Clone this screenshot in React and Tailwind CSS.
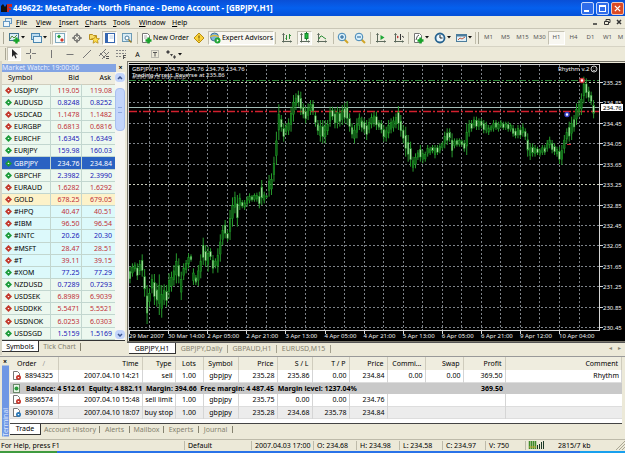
import React, { useState } from 'react';

const quotes = [
    ['USDJPY', '119.05', '119.08', 'down', 'fx'],
    ['AUDUSD', '0.8248', '0.8252', 'up', 'fx'],
    ['USDCAD', '1.1478', '1.1482', 'down', 'fx'],
    ['EURGBP', '0.6813', '0.6816', 'down', 'fx'],
    ['EURCHF', '1.6345', '1.6349', 'up', 'fx'],
    ['EURJPY', '159.98', '160.03', 'up', 'fx'],
    ['GBPJPY', '234.76', '234.84', 'up', 'fx'],
    ['GBPCHF', '2.3982', '2.3990', 'up', 'fx'],
    ['EURAUD', '1.6282', '1.6292', 'down', 'fx'],
    ['GOLD', '678.25', '679.05', 'down', 'metal'],
    ['#HPQ', '40.47', '40.51', 'down', 'stock'],
    ['#IBM', '96.50', '96.54', 'down', 'stock'],
    ['#INTC', '20.26', '20.30', 'up', 'stock'],
    ['#MSFT', '28.47', '28.51', 'down', 'stock'],
    ['#T', '39.11', '39.15', 'down', 'stock'],
    ['#XOM', '77.25', '77.29', 'up', 'stock'],
    ['NZDUSD', '0.7289', '0.7293', 'up', 'fx'],
    ['USDSEK', '6.8989', '6.9039', 'down', 'fx'],
    ['USDDKK', '5.5471', '5.5521', 'down', 'fx'],
    ['USDNOK', '6.0253', '6.0303', 'down', 'fx'],
    ['USDSGD', '1.5159', '1.5169', 'up', 'fx'],
];

const rowColors = { fx: 'bg-[#ecf8ef]', metal: 'bg-[#fdf2c9]', stock: 'bg-[#dcf9fb]' };

// one candle each: high, low, and 1 when it closed lower. Three units to a pixel.
const candles = [
    [620, 670, 1], [610, 650], [607, 635], [610, 660, 1], [600, 645], [583, 650, 1], [627, 710, 1], [675, 792, 1],
    [685, 740], [643, 700], [642, 735, 1], [670, 740, 1], [643, 765], [675, 773], [673, 735], [675, 740, 1],
    [640, 715], [635, 695], [615, 677], [580, 670], [595, 670, 1], [635, 720], [610, 660], [600, 640],
    [580, 625], [583, 605, 1], [625, 675], [645, 675, 1], [615, 678], [583, 655], [533, 615, 1], [555, 620, 1],
    [560, 635], [565, 600, 1], [585, 640, 1], [595, 625], [565, 638], [523, 605], [495, 555], [480, 535, 1],
    [510, 545, 1], [450, 540], [412, 500], [395, 460], [405, 500, 1], [400, 450], [420, 445, 1], [420, 450],
    [408, 440], [400, 430], [405, 425, 1], [400, 425], [398, 425], [395, 445, 1], [360, 435, 1], [395, 430],
    [405, 415], [345, 410], [340, 405], [290, 365], [215, 315], [133, 240], [165, 215, 1], [190, 245, 1],
    [190, 225], [175, 225], [140, 215], [105, 185],
    [100, 150], [92, 140, 1], [95, 165, 1], [130, 175, 1], [140, 190, 1], [130, 180], [120, 165], [120, 165, 1],
    [155, 200, 1], [180, 225, 1], [180, 245], [180, 250, 1], [180, 250], [180, 225], [140, 200], [140, 180, 1],
    [145, 205, 1], [140, 205], [145, 200, 1], [135, 195], [128, 190, 1], [123, 195, 1], [160, 215, 1], [190, 235, 1],
    [195, 250], [175, 235], [160, 210], [170, 215, 1], [175, 220, 1], [180, 240, 1], [175, 220], [160, 205],
    [155, 200], [155, 210, 1], [180, 210, 1], [180, 220, 1], [195, 245, 1], [200, 245], [180, 235], [175, 220],
    [170, 215], [160, 205], [138, 210, 1], [165, 230, 1], [195, 250, 1], [200, 290, 1], [225, 305, 1], [245, 320, 1],
    [290, 335], [280, 325], [270, 300], [255, 305, 1], [270, 310], [275, 305], [255, 290], [260, 285],
    [255, 280, 1], [255, 295], [255, 285, 1], [250, 280], [245, 270], [215, 265], [205, 255, 1], [205, 245, 1],
    [220, 292, 1], [235, 265], [235, 260, 1], [235, 260], [238, 260, 1], [240, 275, 1], [190, 285], [180, 230],
    [180, 215, 1], [170, 205], [170, 210, 1], [175, 210], [175, 205, 1], [180, 220, 1], [185, 220], [195, 225],
    [195, 215], [180, 215], [180, 210, 1], [185, 215], [180, 205], [185, 210, 1], [185, 210], [185, 215, 1],
    [190, 215], [195, 230, 1], [205, 235, 1], [195, 235], [200, 235, 1], [190, 230], [205, 240, 1], [220, 290, 1],
    [250, 300], [250, 290, 1], [255, 290], [260, 285, 1], [265, 290], [255, 285], [255, 285, 1], [240, 275],
    [230, 265], [240, 280, 1], [250, 285, 1], [260, 290], [260, 312, 1], [255, 315], [225, 280], [205, 250],
    [185, 245, 1], [170, 240], [165, 215, 1], [130, 195], [120, 170], [100, 165], [50, 130], [55, 115, 1],
    [80, 125, 1], [95, 135, 1], [120, 175, 1],
];

const prices = ['235.25', '234.85', '234.45', '234.05', '233.65', '233.25', '232.85', '232.45', '232.05', '231.65', '231.25', '230.85', '230.45'];
const times = ['29 Mar 2007', '30 Mar 14:00', '2 Apr 05:00', '2 Apr 21:00', '3 Apr 13:00', '4 Apr 05:00', '4 Apr 21:00', '5 Apr 13:00', '6 Apr 05:00', '6 Apr 21:00', '9 Apr 12:00', '10 Apr 04:00'];

const menus = [
    ['File', 'w-[20px]'],
    ['View', 'w-[23px]'],
    ['Insert', 'w-[26px]'],
    ['Charts', 'w-[28px]'],
    ['Tools', 'w-[26px]'],
    ['Window', 'w-[33px]'],
    ['Help', 'w-[20px]'],
];

const Chart = () => {
    const gridX = (i) => Math.round(21.5 + (i * 430) / 22) - 0.5;
    const gridY = (i) => Math.round(19 + (i * 245) / 12) + 0.5;

    return (
        <svg viewBox="0 0 497 278" className="block h-auto w-full bg-black" role="img" aria-label="GBPJPY hourly chart">
            <g stroke="#7d8288" strokeDasharray="2 2">
                {Array.from({ length: 23 }, (_, i) => (
                    <line key={i} x1={gridX(i)} x2={gridX(i)} y1="2" y2="267" />
                ))}
                {prices.map((p, i) => (
                    <line key={p} x1="1" x2="471" y1={gridY(i)} y2={gridY(i)} stroke={i === 0 || i === 5 ? '#c9ccbb' : '#7d8288'} />
                ))}
            </g>
            <path d="M1 17.5H471" stroke="#2f8a3a" strokeDasharray="7 2 2 2" />
            <path d="M1 48.5H471" stroke="#d3202e" strokeWidth="1.4" strokeDasharray="8 2 2 2" />
            <path d="M1 44.5H471" stroke="#a3bcb6" />

            {candles.map(([high, low, fell], i) => {
                const x = 2 + i * 2.44;
                const top = high / 3 - 3;
                const size = (low - high) / 3;
                return (
                    <g key={i}>
                        <rect x={x - 0.5} y={top} width="1" height={size} fill="#279a2d" />
                        <rect
                            x={x - 0.8}
                            y={top + size * 0.28}
                            width="1.6"
                            height={size * 0.44}
                            fill={fell ? '#b4e8ac' : '#0f6416'}
                            stroke="#1f9a26"
                            strokeWidth="0.5"
                        />
                    </g>
                );
            })}

            <circle cx="454" cy="17.5" r="2" fill="#fff" stroke="#d8343a" strokeWidth="1.5" />
            <circle cx="439" cy="51.5" r="2" fill="#fff" stroke="#3a44c8" strokeWidth="1.5" />
            <path d="M439 81.5H443" stroke="#c01f2c" />

            <path d="M0.5 278V0M1 1.5H471M1 267.5H472M471.5 1V268" stroke="#d6d6d6" fill="none" />
            <g fill="#f2f2f2" fontSize="6">
                <text x="4" y="8">GBPJPY,H1&nbsp; 234.76 234.76 234.76 234.76</text>
                <text x="4" y="14">Trading Arrest, Reverse at 235.86</text>
                <text x="4" y="16" fillOpacity="0.7">#8901078 buy stop</text>
                <text x="430" y="8">Rhythm v.2</text>
                {prices.map((p, i) => (
                    <g key={p}>
                        <path d={`M472 ${gridY(i)}h3`} stroke="#d6d6d6" />
                        <text x="475" y={gridY(i) + 2.5}>{p}</text>
                    </g>
                ))}
                {times.map((t, i) => (
                    <g key={t}>
                        <path d={`M${Math.round(1 + i * 39.1) + 0.5} 268v3`} stroke="#d6d6d6" />
                        <text x={1 + i * 39.1} y="275">{t}</text>
                    </g>
                ))}
            </g>
            <rect x="473" y="41" width="22" height="7" fill="#fff" />
            <text x="475" y="47" fontSize="6" fill="#000">234.76</text>
            <g stroke="#c8c8c8" fill="none">
                <circle cx="466" cy="6" r="3" />
                <path d="M464.5 7q1.5 1.5 3 0M465 5h.5M467 5h.5" strokeWidth="0.8" />
            </g>
        </svg>
    );
};

const Icon = ({ children }) => (
    <svg viewBox="0 0 12 12" className="size-3 shrink-0" fill="none" stroke="#555" aria-hidden="true">
        {children}
    </svg>
);

const Caret = () => (
    <svg viewBox="0 0 4 3" className="h-[3px] w-1 shrink-0" aria-hidden="true"><path d="M0 0h4l-2 2.5z" fill="#111" /></svg>
);

const ToolButton = ({ label, width, pressed, caret, text, children }) => (
    <button
        type="button"
        aria-label={label}
        className={`flex h-[14px] shrink-0 items-center justify-center gap-px whitespace-nowrap ${width} ${pressed ? 'border border-[#c3c0b1] border-r-white border-b-white bg-[#f8f7f1]' : ''}`}
    >
        {children}
        {text}
        {caret && <Caret />}
    </button>
);

const Divider = () => <span className="mx-px h-3 w-px shrink-0 bg-[#c0bdab]" />;
const Grip = () => <span className="mx-px h-3 w-px shrink-0 border-l border-[#a9a694]" />;

const Plus = () => <path d="M8.5 5.5v6M5.5 8.5h6" stroke="#17a32a" strokeWidth="2.4" />;
const Axes = () => <path d="M2.5 1.5v9M1 9.5h9.5M1.5 3l1-1.5 1 1.5M9.5 8.5l1 1-1 1" stroke="#5d6a5d" />;

const MainToolbar = () => (
    <div className="flex h-[18px] items-center overflow-hidden border-t border-[#c9c6b6] bg-[#efeddf] pl-0.5">
        <Grip />
        <ToolButton label="New chart" width="w-[22px]" caret>
            <Icon><rect x="1.5" y="1.5" width="9" height="7" fill="#d8ecf5" stroke="#42758f" /><path d="M2 7l2-3 2 2 3-3" stroke="#5a8c3c" /><Plus /></Icon>
        </ToolButton>
        <ToolButton label="Profiles" width="w-[22px]" caret>
            <Icon><rect x="1.5" y="1.5" width="8" height="6" fill="#bcdcf0" stroke="#4a86b0" /><rect x="3.5" y="4.5" width="8" height="6" fill="#e6f3fa" stroke="#4a86b0" /></Icon>
        </ToolButton>
        <Divider />
        <ToolButton label="Market Watch" width="w-[15px]" pressed>
            <Icon><rect x="1.5" y="1.5" width="9" height="9" fill="#f4fafc" stroke="#7fa9c0" /><path d="M3 4.5l2-2 2 2-2 2z" fill="#1f9c35" stroke="none" /><path d="M6 8l2-2 2 2-2 2z" fill="#d33b2b" stroke="none" /></Icon>
        </ToolButton>
        <ToolButton label="Data Window" width="w-[19px]">
            <Icon><circle cx="6" cy="6" r="3.2" /><path d="M6 1v4M6 7v4M1 6h4M7 6h4" /></Icon>
        </ToolButton>
        <ToolButton label="Navigator" width="w-[16px]">
            <Icon><path d="M1.5 2.5h3l1 1h3v4h-7z" fill="#f7dd6a" stroke="#b78e1f" /><path d="M7.5 4l1.2 2.4 2.8.3-2 1.8.6 2.7-2.6-1.4-2.4 1.4.5-2.7-2-1.8 2.7-.3z" fill="#ffe04a" stroke="#b98b16" strokeWidth="0.8" /></Icon>
        </ToolButton>
        <ToolButton label="Terminal" width="w-[15px]" pressed>
            <Icon><rect x="1.5" y="1.5" width="9" height="9" fill="#fff" stroke="#3566b0" /><path d="M3 2v8" stroke="#3566b0" strokeWidth="2" /><path d="M5.5 4h4M5.5 6h4" stroke="#b8cde6" /></Icon>
        </ToolButton>
        <ToolButton label="Strategy Tester" width="w-[19px]">
            <Icon><rect x="1.5" y="1.5" width="9" height="8" fill="#d9ecf5" stroke="#6b9ab5" /><circle cx="6" cy="6" r="2" fill="#fff" stroke="#4a7da0" /><path d="M7.5 7.5l3 3" stroke="#987b2a" strokeWidth="1.5" /></Icon>
        </ToolButton>
        <Divider />
        <ToolButton label="New Order" width="w-[51px]" text="New Order">
            <Icon><path d="M2.5 1.5h5l2 2v7h-7z" fill="#fff" stroke="#777" /><path d="M4 4h3M4 6h3" stroke="#aaa" /><Plus /></Icon>
        </ToolButton>
        <ToolButton label="MetaEditor" width="w-[18px]">
            <Icon><path d="M6 1l5 5-5 5-5-5z" fill="#fbd33c" stroke="#b88d0e" /><path d="M6 3.5v3M6 7.5v1.2" stroke="#5f4600" /></Icon>
        </ToolButton>
        <ToolButton label="Expert Advisors" width="w-[66px]" pressed text="Expert Advisors">
            <Icon><circle cx="5.5" cy="5" r="4" fill="#7fb7dc" stroke="#416f91" /><path d="M1 5q4.5-3 9 0" stroke="#e1be3e" strokeWidth="1.5" /><circle cx="8.5" cy="8.5" r="3" fill="#22a536" stroke="none" /><path d="M7.8 7l2 1.5-2 1.5z" fill="#fff" stroke="none" /></Icon>
        </ToolButton>
        <Divider />
        <ToolButton label="Bar chart" width="w-[20px]">
            <Icon><Axes /><path d="M5.5 3v5M8.5 2v5M4.5 6.5h1M8.5 3.5H10" stroke="#2e8f38" /></Icon>
        </ToolButton>
        <ToolButton label="Candlesticks" width="w-[15px]" pressed>
            <Icon><Axes /><path d="M7.5 0v8.5" stroke="#14802a" /><rect x="6" y="1.5" width="3" height="5" fill="#1fbd3b" stroke="#14802a" /></Icon>
        </ToolButton>
        <ToolButton label="Line chart" width="w-[20px]">
            <Icon><Axes /><path d="M3 7q2-5 4-2l3 2" stroke="#2e8f38" /></Icon>
        </ToolButton>
        <Divider />
        <ToolButton label="Zoom in" width="w-[15px]">
            <Icon><path d="M7.5 7.5L11 11" stroke="#d0a528" strokeWidth="2" /><circle cx="5" cy="5" r="3.8" fill="#d9f0fb" stroke="#3f84b5" /><path d="M3 5h4M5 3v4" stroke="#1f5f93" /></Icon>
        </ToolButton>
        <ToolButton label="Zoom out" width="w-[19px]">
            <Icon><path d="M7.5 7.5L11 11" stroke="#d0a528" strokeWidth="2" /><circle cx="5" cy="5" r="3.8" fill="#d9f0fb" stroke="#3f84b5" /><path d="M3 5h4" stroke="#1f5f93" /></Icon>
        </ToolButton>
        <Divider />
        <ToolButton label="Auto scroll" width="w-[18px]">
            <Icon><Axes /><path d="M5.5 3l4 2.5-4 2.5z" fill="#1fa736" stroke="none" /></Icon>
        </ToolButton>
        <ToolButton label="Chart shift" width="w-[17px]">
            <Icon><Axes /><path d="M7.5 2v6M9 4l2 1.5" stroke="#333" /><path d="M4 3.5L6 5 4 6.5z" fill="#b33" stroke="none" /></Icon>
        </ToolButton>
        <Divider />
        <ToolButton label="Indicators" width="w-[21px]" caret>
            <Icon><path d="M2.5 1.5h5l2 2v7h-7z" fill="#fff" stroke="#777" /><path d="M4 8q1-5 3-5" /><Plus /></Icon>
        </ToolButton>
        <ToolButton label="Periods" width="w-[22px]" caret>
            <Icon><circle cx="6" cy="6" r="4.5" fill="#eaf6fd" stroke="#26638f" strokeWidth="1.8" /><path d="M6 3v3h2.5" stroke="#222" /></Icon>
        </ToolButton>
        <ToolButton label="Templates" width="w-[21px]" caret>
            <Icon><rect x="1.5" y="2.5" width="10" height="7" fill="#e1f0f8" stroke="#4c7d9c" /><path d="M1.5 3.5h10" stroke="#4c7d9c" strokeWidth="2" /><path d="M3 8l2-2 2 1 3-2" stroke="#c25a3a" /></Icon>
        </ToolButton>
        <Divider />
        <Grip />
        <div className="flex text-[6px] text-[#555]">
            {['M1', 'M5', 'M15', 'M30', 'H1', 'H4', 'D1', 'W1'].map((tf) => (
                <ToolButton key={tf} label={tf} width="w-[17px]" pressed={tf === 'H1'} text={tf} />
            ))}
            <ToolButton label="MN" width="w-[9px]" text="M" />
        </div>
    </div>
);

const LineToolbar = () => (
    <div className="flex h-[15px] items-center overflow-hidden border-t border-[#d6d3c4] bg-[#ece9d8] pl-1">
        <Grip />
        <ToolButton label="Cursor" width="w-[14px]" pressed>
            <Icon><path d="M4 1v8l2-2 1.500 3.500 1.200-.5L7.200 6.500H10z" fill="#222" stroke="none" /></Icon>
        </ToolButton>
        <ToolButton label="Crosshair" width="w-[20px]">
            <Icon><path d="M5.5 1v4M5.5 7v4M1 5.5h4M7 5.5h4" stroke="#777" /></Icon>
        </ToolButton>
        <ToolButton label="Vertical line" width="w-[20px]"><Icon><path d="M6.5 2v8" stroke="#777" /></Icon></ToolButton>
        <ToolButton label="Horizontal line" width="w-[17px]"><Icon><path d="M2.5 6.5h7" stroke="#777" /></Icon></ToolButton>
        <ToolButton label="Trendline" width="w-[17px]"><Icon><path d="M2 10l8-8" stroke="#777" /></Icon></ToolButton>
        <ToolButton label="Equidistant channel" width="w-[17px]">
            <Icon><path d="M1 8l7-7M4 11l7-7M2 5l5 5M5 3l4 4" stroke="#777" /><path d="M8 8.5h3M8 10.5h3" /></Icon>
        </ToolButton>
        <ToolButton label="Fibonacci retracement" width="w-[17px]">
            <Icon><path d="M1 2.5h10M1 5.5h10M1 8.5h6" stroke="#888" strokeDasharray="2 1" /><path d="M8.5 7v4M8.5 7.5H11M8.5 9.5h2" /></Icon>
        </ToolButton>
        <ToolButton label="Text" width="w-[17px]" text="A" />
        <ToolButton label="Text label" width="w-[17px]">
            <Icon><rect x="2.5" y="2.5" width="7" height="7" stroke="#888" strokeDasharray="1 1" /><path d="M4 4.5h4M6 4.5v4" /></Icon>
        </ToolButton>
        <ToolButton label="Arrows" width="w-[20px]" caret>
            <Icon><path d="M1 4l2-2 2 2-2 2zM5 6h3L6.500 8.500zM8 9l1.500-2L11 9l-1.500 2z" fill="#444" stroke="none" /></Icon>
        </ToolButton>
    </div>
);

const MarketWatch = () => {
    const [selected, setSelected] = useState('GBPJPY');

    return (
        <aside className="flex w-[125px] shrink-0 flex-col border-l-2 border-[#d8d5c5] pt-0.5">
            <div className="flex h-[9px] items-center justify-between">
                <h2 className="flex h-2 flex-1 items-center bg-[#83a4e4] text-[#e9f0ff]">Market Watch: 19:00:06</h2>
                <button type="button" aria-label="Close Market Watch" className="w-[9px] text-center font-bold leading-none">×</button>
            </div>
            <div className="flex flex-1 bg-white">
                <table className="h-[268px] flex-1 table-fixed border-collapse">
                    <thead>
                        <tr className="h-3 border-b border-[#d0cdbd] bg-[#efeddf]">
                            <th className="w-12 pl-1.5 text-left font-normal">Symbol</th>
                            <th className="w-[31px] pr-0.5 text-right font-normal">Bid</th>
                            <th className="pr-1 text-right font-normal">Ask</th>
                        </tr>
                    </thead>
                    <tbody>
                        {quotes.map(([symbol, bid, ask, dir, kind]) => {
                            const active = symbol === selected;
                            const tone = active ? 'text-white' : dir === 'up' ? 'text-[#2020b8]' : 'text-[#c03038]';
                            return (
                                <tr
                                    key={symbol}
                                    onClick={() => setSelected(symbol)}
                                    className={`border-b border-[#c2d6cf] ${active ? 'bg-[#2a62c2] text-white' : rowColors[kind]}`}
                                >
                                    <td className="border-r border-[#c2d6cf] p-0 pl-[3px]">
                                        <span className="flex items-center gap-0.5">
                                            <svg viewBox="0 0 7 7" className="size-[7px]" aria-hidden="true">
                                                <path d="M3.5 0L7 3.5 3.5 7 0 3.5z" fill={dir === 'up' ? '#1c9a3a' : '#c2382c'} />
                                                <path d={dir === 'up' ? 'M3.5 2.500l1 1.500h-2z' : 'M3.5 4.500l1-1.500h-2z'} fill="#fff" />
                                            </svg>
                                            {symbol}
                                        </span>
                                    </td>
                                    <td className={`border-r border-[#c2d6cf] p-0 pr-px text-right ${tone}`}>{bid}</td>
                                    <td className={`p-0 pr-[3px] text-right ${tone}`}>{ask}</td>
                                </tr>
                            );
                        })}
                    </tbody>
                </table>
                <div className="flex w-[10px] flex-col items-center justify-between bg-[#f6f6f2] py-px">
                    <div className="flex w-full flex-col gap-1.5">
                        <button type="button" aria-label="Scroll up" className="flex h-[9px] items-center justify-center rounded-sm bg-[#c3d5fb]">
                            <svg viewBox="0 0 6 4" className="h-1 w-1.5" aria-hidden="true"><path d="M1 3l2-2 2 2" fill="none" stroke="#3c5590" strokeWidth="1.5" /></svg>
                        </button>
                        <div className="flex h-[43px] items-center justify-center rounded-sm border border-[#a9c0f0] bg-[#c3d5fb]">
                            <span className="h-1.5 w-1 border-y border-[#8ea9e0]" />
                        </div>
                    </div>
                    <button type="button" aria-label="Scroll down" className="flex h-[9px] w-full items-center justify-center rounded-sm bg-[#c3d5fb]">
                        <svg viewBox="0 0 6 4" className="h-1 w-1.5" aria-hidden="true"><path d="M1 1l2 2 2-2" fill="none" stroke="#3c5590" strokeWidth="1.5" /></svg>
                    </button>
                </div>
            </div>
            <div className="flex h-[15px] items-start border-t border-[#333]">
                <button type="button" className="h-[11px] w-[37px] border-r border-b border-[#333] bg-white">Symbols</button>
                <button type="button" className="h-[11px] w-[41px] text-[#85826f]">Tick Chart</button>
                <span className="mt-0.5 h-2 w-px bg-[#85826f]" />
            </div>
        </aside>
    );
};

const ChartTabs = () => (
    <div className="flex h-[13px] items-start border-t border-[#555] pl-0.5 text-[#85826f]">
        <button type="button" className="h-[11px] w-[47px] border-r border-b border-[#333] bg-white text-black">GBPJPY,H1</button>
        <button type="button" className="h-[11px] w-[51px] text-center">GBPJPY,Daily</button>
        <span className="mt-0.5 h-2 w-px bg-[#a5a28f]" />
        <button type="button" className="h-[11px] w-[48px] text-center">GBPAUD,H1</button>
        <span className="mt-0.5 h-2 w-px bg-[#a5a28f]" />
        <button type="button" className="h-[11px] w-[53px] text-center">EURUSD,M15</button>
        <span className="mt-0.5 h-2 w-px bg-[#a5a28f]" />
        <div className="ml-auto flex gap-1.5 pr-1">
            <button type="button" aria-label="Previous chart" className="h-[11px] text-[6px]">◂</button>
            <button type="button" aria-label="Next chart" className="h-[11px] text-[6px]">▸</button>
        </div>
    </div>
);

const columns = [
    ['Time', 'w-[84px]', 'text-right'],
    ['Type', 'w-[33px]', 'text-right'],
    ['Lots', 'w-[28px]', 'text-center'],
    ['Symbol', 'w-[35px]', 'text-center'],
    ['Price', 'w-[39px]', 'text-right'],
    ['S / L', 'w-[35px]', 'text-right'],
    ['T / P', 'w-[37px]', 'text-right'],
    ['Price', 'w-[38px]', 'text-right'],
    ['Commi...', 'w-[38px]', 'text-right'],
    ['Swap', 'w-[38px]', 'text-right'],
    ['Profit', 'w-[42px]', 'text-right'],
    ['Comment', '', 'text-right'],
];

const OrderIcon = ({ color }) => (
    <svg viewBox="0 0 9 9" className="size-[9px]" aria-hidden="true">
        <path d="M1.5.5h4l2 2v6h-6z" fill="#fff" stroke="#777" />
        <circle cx="6.5" cy="6.5" r="2.500" fill={color} />
        <path d="M5.5 6h2l-1 1.500z" fill="#fff" />
    </svg>
);

const OrderRow = ({ id, color, cells, shade }) => (
    <tr className={`h-3 border-b border-[#ddd] ${shade ? 'bg-[#ececec]' : 'bg-white'}`}>
        <td className="border-r border-[#d5d5d5] p-0 pl-0.5">
            <span className="flex items-center gap-1"><OrderIcon color={color} />{id}</span>
        </td>
        {cells.map((cell, i) => (
            <td
                key={i}
                className={`overflow-hidden p-0 px-0.5 whitespace-nowrap ${columns[i][2]} ${cell || i === 10 ? 'border-r border-[#d5d5d5]' : ''}`}
            >
                {cell}
            </td>
        ))}
    </tr>
);

const Terminal = () => (
    <section className="mt-px flex border-t border-[#999]">
        <div className="flex w-[10px] shrink-0 flex-col items-center">
            <button type="button" aria-label="Close Terminal" className="h-[9px] font-bold leading-none">×</button>
            <h2 className="flex w-[7px] flex-1 items-center justify-start bg-[#6f97e4] pb-px text-[#dfe9ff] [writing-mode:vertical-rl] rotate-180">Terminal</h2>
        </div>
        <div className="min-w-0 flex-1">
            <div className="mr-[3px] border-b border-[#444] bg-white pb-1">
                <table className="w-full table-fixed border-collapse">
                    <thead>
                        <tr className="h-[13px] bg-[#efeddf]">
                            <th className="w-12 border-r border-[#cfccbd] p-0 pl-[7px] text-left font-normal">Order<span className="pl-1.5 text-[#999]">/</span></th>
                            {columns.map(([name, width, align], i) => (
                                <th key={i} className={`border-r border-[#cfccbd] p-0 px-[3px] font-normal whitespace-nowrap ${width} ${align}`}>{name}</th>
                            ))}
                        </tr>
                    </thead>
                    <tbody>
                        <OrderRow id="8894325" color="#c8372d" cells={['2007.04.10 14:21', 'sell', '1.00', 'gbpjpy', '235.28', '235.86', '0.00', '234.84', '0.00', '0.00', '369.50', 'Rhythm']} />
                        <tr className="h-3 bg-[#c9c9c9] font-bold">
                            <td colSpan={11} className="p-0 pl-0.5">
                                <span className="flex items-center gap-[5px] whitespace-pre">
                                    <svg viewBox="0 0 9 9" className="size-[9px]" aria-hidden="true">
                                        <rect x="1.5" y=".5" width="6" height="8" fill="#e9f7e9" stroke="#6b8a6b" />
                                        <circle cx="4.5" cy="4.5" r="2" fill="#2a9a3c" />
                                    </svg>
                                    Balance: 4 512.61  Equity: 4 882.11  Margin: 394.66  Free margin: 4 487.45  Margin level: 1237.04%
                                </span>
                            </td>
                            <td className="p-0 px-0.5 text-right">369.50</td>
                            <td />
                        </tr>
                        <OrderRow id="8896574" color="#c8372d" cells={['2007.04.10 15:48', 'sell limit', '1.00', 'gbpjpy', '235.75', '0.00', '0.00', '234.76', '', '', '', '']} />
                        <OrderRow shade id="8901078" color="#2a78b8" cells={['2007.04.10 18:07', 'buy stop', '1.00', 'gbpjpy', '235.28', '234.68', '235.78', '234.84', '', '', '', '']} />
                    </tbody>
                </table>
            </div>
            <div className="flex h-[13px] items-start text-[#85826f]">
                <button type="button" className="h-[11px] w-[31px] border-r border-b border-[#333] bg-white text-black">Trade</button>
                {[['Account History', 'w-[58px]'], ['Alerts', 'w-[29px]'], ['Mailbox', 'w-[33px]'], ['Experts', 'w-[34px]'], ['Journal', 'w-[33px]']].map(([name, width]) => (
                    <div key={name} className="flex items-center">
                        <button type="button" className={`h-[11px] text-center ${width}`}>{name}</button>
                        <span className="h-[7px] w-px bg-[#85826f]" />
                    </div>
                ))}
            </div>
        </div>
    </section>
);

const StatusBar = () => {
    const cells = [
        ['For Help, press F1', 'w-[185px]'],
        ['Default', 'w-[67px]'],
        ['2007.04.03 17:00', 'w-[62px]'],
        ['O: 234.68', 'w-[43px]'],
        ['H: 234.98', 'w-[43px]'],
        ['L: 234.58', 'w-[43px]'],
        ['C: 234.97', 'w-[43px]'],
        ['V: 750', 'w-[40px]'],
    ];

    return (
        <footer className="mt-0.5 flex h-3 items-center border-t border-[#bdbaa9]">
            {cells.map(([text, width]) => (
                <span key={text} className={`shrink-0 border-r border-[#bdbaa9] pl-[3px] whitespace-nowrap first:pl-px ${width}`}>{text}</span>
            ))}
            <svg viewBox="0 0 16 8" className="ml-0.5 h-2 w-4" aria-hidden="true">
                <path d="M1.5 0v8M3.5 0v8M5.5 0v8M7.5 0v8" stroke="#3f8a2a" strokeWidth="1.5" />
                <path d="M1 6h7" stroke="#c7a82c" />
                <path d="M9.5 4v4M11.5 3v5M13.5 1v7M15.5 0v8" stroke="#1c3a28" />
            </svg>
            <span className="ml-[14px] whitespace-nowrap">2815/7 kb</span>
            <svg viewBox="0 0 10 10" className="ml-auto size-2.5" aria-hidden="true"><path d="M1 10L10 1M4 10l6-6M7 10l3-3" stroke="#aaa794" /></svg>
        </footer>
    );
};

const App = () => {
    return (
        <div className="min-w-[600px] overflow-hidden bg-[#ece9d8] font-['Noto_Sans',sans-serif] text-[7px] leading-[9px] text-black">
            <header className="flex h-4 items-center bg-linear-to-b from-[#0a4fd6] via-[#0560ee] to-[#0450d8] pl-px text-white">
                <svg viewBox="0 0 11 9" className="h-[9px] w-[11px]" aria-hidden="true">
                    <path d="M0 8V2l2-2 2 3 2-3v8z" fill="#111" /><path d="M6 0h5v3H8v1h2v2H8v2H6z" fill="#c62828" />
                </svg>
                <h1 className="flex-1 truncate pl-px text-[8px] leading-3 font-bold">449622: MetaTrader - North Finance - Demo Account - [GBPJPY,H1]</h1>
                <div className="flex gap-0.5 pr-px">
                    <button type="button" aria-label="Minimize" className="flex size-[13px] items-end rounded-xs border border-[#c8d8fb] bg-[#2f6cea] p-0.5"><span className="h-0.5 w-[5px] bg-white" /></button>
                    <button type="button" aria-label="Maximize" className="size-[13px] rounded-xs border border-[#c8d8fb] bg-[#2f6cea] p-0.5"><span className="block size-full border border-t-2 border-white" /></button>
                    <button type="button" aria-label="Close" className="size-[13px] rounded-xs border border-[#f0c8bd] bg-[#dc4a24] p-0.5">
                        <svg viewBox="0 0 8 8" aria-hidden="true"><path d="M1 1l6 6M7 1L1 7" stroke="#fff" strokeWidth="1.5" /></svg>
                    </button>
                </div>
            </header>

            <nav className="flex h-3 items-center bg-[#ece9d8] pl-[3px]">
                <svg viewBox="0 0 9 9" className="mr-1 size-[9px]" aria-hidden="true">
                    <rect x="2.5" y=".5" width="6" height="5" fill="#d9ecf8" stroke="#6698c2" /><rect x=".5" y="3.5" width="6" height="5" fill="#eef7fc" stroke="#6698c2" />
                </svg>
                {menus.map(([name, width]) => (
                    <button key={name} type="button" className={`text-left ${width}`}><u>{name[0]}</u>{name.slice(1)}</button>
                ))}
                <div className="ml-auto flex gap-1 pr-0.5">
                    <button type="button" aria-label="Minimize chart"><svg viewBox="0 0 8 8" className="size-2"><path d="M2 6h4" stroke="#333" strokeWidth="1.5" /></svg></button>
                    <button type="button" aria-label="Restore chart"><svg viewBox="0 0 8 8" className="size-2"><path d="M3 3V1.500h4v3H5.500M1.500 3.500h4v3h-4z" fill="none" stroke="#333" /></svg></button>
                    <button type="button" aria-label="Close chart"><svg viewBox="0 0 8 8" className="size-2"><path d="M2 2l4 4M6 2L2 6" stroke="#333" strokeWidth="1.5" /></svg></button>
                </div>
            </nav>

            <MainToolbar />
            <LineToolbar />

            <main className="flex">
                <MarketWatch />
                <div className="flex min-w-0 flex-1 flex-col pl-0.5">
                    <div className="border-y border-l border-[#77756a] pt-px">
                        <Chart />
                    </div>
                    <ChartTabs />
                </div>
            </main>

            <Terminal />
            <StatusBar />
            <div className="flex h-0.5 bg-[#2a73e8]">
                <span className="w-[57px] bg-[#3f9b3f]" />
                <span className="ml-auto w-[45px] bg-[#18a0ee]" />
            </div>
        </div>
    );
};

export default App;
